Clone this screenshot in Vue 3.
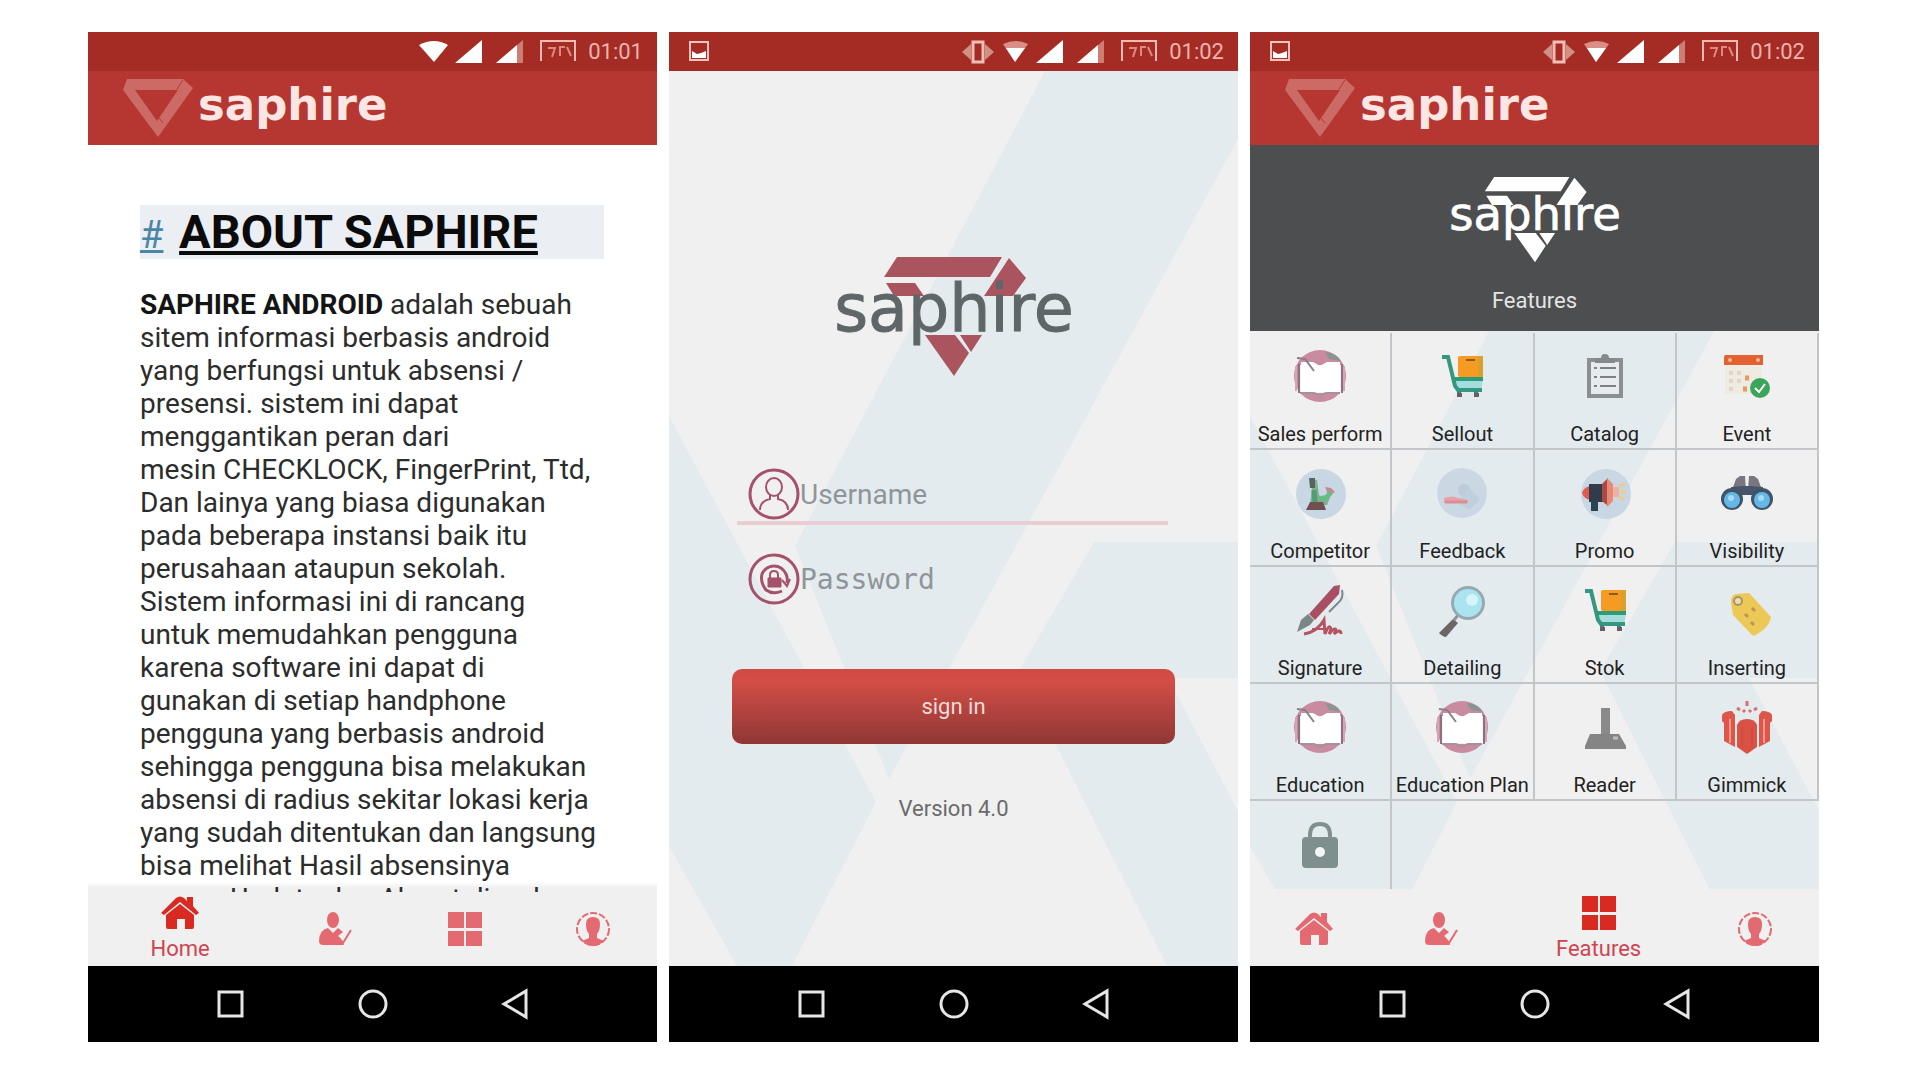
<script setup>
import { h } from 'vue'

const aboutLines = [
  'sitem informasi berbasis android',
  'yang berfungsi untuk absensi /',
  'presensi. sistem ini dapat',
  'menggantikan peran dari',
  'mesin CHECKLOCK, FingerPrint, Ttd,',
  'Dan lainya yang biasa digunakan',
  'pada beberapa instansi baik itu',
  'perusahaan ataupun sekolah.',
  'Sistem informasi ini di rancang',
  'untuk memudahkan pengguna',
  'karena software ini dapat di',
  'gunakan di setiap handphone',
  'pengguna yang berbasis android',
  'sehingga pengguna bisa melakukan',
  'absensi di radius sekitar lokasi kerja',
  'yang sudah ditentukan dan langsung',
  'bisa melihat Hasil absensinya',
  'secara Update dan Akurat di web',
]

const book =
  '<circle cx="28" cy="28" r="26" fill="#c98ba0"/><path d="M33 4q12 1 16 9l-12-2z" fill="#8b9493"/><path d="M6 17h44v28H6z" fill="#f6eff3"/><path d="M4 18v25M52 18v25" stroke="#d3a5b5" stroke-width="2"/><path d="M7 16v29M50 16v29" stroke="#8d6f80" stroke-width="2"/><path d="M9 14h12l7 4 7-4h13v30H9z" fill="#fff"/><path d="M5 10l8 1 9 12" fill="none" stroke="#8a8088" stroke-width="2"/><path d="M8 45h14l6 3 6-3h14" fill="none" stroke="#a6909a" stroke-width="2"/>'
const cart =
  '<rect x="24" y="8" width="25" height="21" rx="2" fill="#f59a22"/><path d="M44 8h5v21h-5z" fill="#d9a02c"/><path d="M32 12h9" stroke="#8f5a1c" stroke-width="2"/><path d="M20 33h29l-2 9H22z" fill="#a5dcdc"/><path d="M8 9h6l7 29 3 4h24" fill="none" stroke="#35977f" stroke-width="4"/><path d="M19 31h30" stroke="#2d9a78" stroke-width="4"/><path d="M25 43v5M42 43v5" stroke="#2d8f7e" stroke-width="4"/><path d="M23 47h5M40 47h5" stroke="#6f5a68" stroke-width="4"/>'

const icons = {
  book,
  cart,
  clipboard:
    '<path d="M12 12h32v36H12z" fill="#e6ebee" stroke="#8b8f92" stroke-width="4"/><path d="M18 15v-5h6q0-4 4-4t4 4h6v5z" fill="#85898c"/><path d="M17 20h3M17 29h3M17 38h3M23 20h16M23 29h16M23 38h16" stroke="#7d8184" stroke-width="2"/>',
  event:
    '<path d="M6 18h37v28H6z" fill="#efebe2"/><path d="M5 9q0-2 2-2h37v10H5z" fill="#e4622f"/><circle cx="11" cy="12" r="2" fill="#f4b49b"/><circle cx="39" cy="12" r="2" fill="#f4b49b"/><path d="M10 25h4M18 25h4M10 33h4M18 33h4M10 41h4" stroke="#dcd6cb" stroke-width="4"/><path d="M26 30h4M24 41h4" stroke="#e59a62" stroke-width="5"/><circle cx="41" cy="40" r="10" fill="#3ba55b"/><path d="M36 40l4 4 6-8" fill="none" stroke="#fff" stroke-width="2"/>',
  competitor:
    '<circle cx="29" cy="29" r="25" fill="#c9d6e3"/><path d="M18 40l3-25 4 0 2 15 5 4 5-11 4 2-6 15z" fill="#7fae90"/><path d="M17 13h6v10h-5z" fill="#56635f"/><path d="M22 25l1 13" stroke="#4f9e6f" stroke-width="5"/><path d="M33 22l6 1 4 4-6 4z" fill="#b98d90"/><path d="M28 33q7 0 11-5" stroke="#5fc281" stroke-width="4" fill="none"/><path d="M14 45l4-8h13l3 8z" fill="#70504f"/>',
  feedback:
    '<circle cx="28" cy="28" r="25" fill="#cbd8e4"/><circle cx="30" cy="25" r="6" fill="#bdcbd6"/><path d="M34 22l12 12-10 11-12-6z" fill="#c0cfdc"/><path d="M10 33q9-3 14 0l10 2v3H10z" fill="#e5a3a6"/><path d="M11 37h22" stroke="#dc8c92" stroke-width="3"/>',
  promo:
    '<circle cx="29" cy="29" r="25" fill="#c9d6e3"/><path d="M5 28q2-7 10-7v14q-8 0-10-7z" fill="#e05b4d"/><path d="M12 19h15v18H12z" fill="#303b4c"/><path d="M14 35h7v11h-7z" fill="#2c4250"/><path d="M25 19l6-6v28l-6-5z" fill="#a94a43"/><path d="M30 13l6 6v17l-6 6z" fill="#e98a79"/><path d="M36 22h6v10h-6z" fill="#efb2a2"/><path d="M42 21l6-2M43 27h6M42 32l5 2" stroke="#e8cf8c" stroke-width="3"/>',
  binoculars:
    '<path d="M17 14l4-3h5l1 14H13zM39 14l-4-3h-5l-1 14h14z" fill="#7a7681"/><path d="M12 22l12-1h8l12 1-2 10-9-2h-10l-9 2z" fill="#48566b"/><circle cx="13" cy="34" r="11" fill="#3f5468"/><circle cx="43" cy="34" r="11" fill="#3f5468"/><circle cx="13" cy="35" r="8" fill="#65b8e6"/><circle cx="43" cy="35" r="8" fill="#65b8e6"/><circle cx="12" cy="33" r="3" fill="#a4dbf5"/><circle cx="42" cy="33" r="3" fill="#a4dbf5"/>',
  signature:
    '<path d="M48 3l-6 1-25 28 6 6 24-26z" fill="#a94f63"/><path d="M50 8q2 8-4 13l-9 9" fill="none" stroke="#7e888b" stroke-width="2"/><path d="M16 32l6 6-4 5-13 7 4-12z" fill="#7c8785"/><path d="M12 52q13-2 20-14l1 14q3-8 5-7t-1 7q4-5 6-5t-1 5q3-3 5-3t2 3" fill="none" stroke="#b45462" stroke-width="3"/><path d="M20 47h14" stroke="#b45462" stroke-width="2"/>',
  magnifier:
    '<path d="M19 37l5 4-12 14q-3 0-7-4z" fill="#6d6468"/><path d="M20 38l5-6" stroke="#8e9299" stroke-width="3"/><circle cx="34" cy="21" r="17" fill="#95a9b0"/><circle cx="34" cy="21" r="14" fill="#abe4f0"/><circle cx="38" cy="18" r="6" fill="#d4f4f8"/>',
  tag:
    '<path d="M12 20q0-7 5-8l13-1 22 24q-2 12-18 19L14 33z" fill="#ecc957"/><circle cx="19" cy="19" r="4" fill="#ecdcae" stroke="#aa9360" stroke-width="2"/><path d="M33 26l3 3M26 32l3 3M32 40l3 3" stroke="#c5905c" stroke-width="3"/>',
  reader:
    '<path d="M24 9h9v26h-9z" fill="#8a8a8a"/><path d="M13 35h29l7 12v3H8v-3z" fill="#858585"/><path d="M36 39h5" stroke="#bdbdbd" stroke-width="3"/>',
  gift:
    '<path d="M3 16q2-4 10-4l3 4v32L5 42V24l-2-2zM53 16q-2-4-10-4l-3 4v32l11-6V24l2-2z" fill="#de5549"/><path d="M18 26q2-6 10-6t10 6v22l-10 7-10-7z" fill="#da5246"/><path d="M28 2v5M18 9l3 2M38 9l-3 2M24 11l2 2M32 11l-2 2" stroke="#da6e70" stroke-width="3"/><path d="M11 20v24M45 20v24" stroke="#ee9a90" stroke-width="2"/><path d="M23 28v20M33 28v20" stroke="#c8443a" stroke-width="1"/>',
  lock:
    '<path d="M18 25v-6q0-11 10-11t10 11v6" fill="none" stroke="#80908f" stroke-width="4"/><rect x="10" y="21" width="36" height="31" rx="4" fill="#7f8f8e"/><circle cx="28" cy="36" r="5" fill="#f2f5f5"/>',
}

const features = [
  { label: 'Sales perform', icon: 'book' },
  { label: 'Sellout', icon: 'cart' },
  { label: 'Catalog', icon: 'clipboard' },
  { label: 'Event', icon: 'event' },
  { label: 'Competitor', icon: 'competitor' },
  { label: 'Feedback', icon: 'feedback' },
  { label: 'Promo', icon: 'promo' },
  { label: 'Visibility', icon: 'binoculars' },
  { label: 'Signature', icon: 'signature' },
  { label: 'Detailing', icon: 'magnifier' },
  { label: 'Stok', icon: 'cart' },
  { label: 'Inserting', icon: 'tag' },
  { label: 'Education', icon: 'book' },
  { label: 'Education Plan', icon: 'book' },
  { label: 'Reader', icon: 'reader' },
  { label: 'Gimmick', icon: 'gift' },
  { label: '', icon: 'lock' },
]

const tabIcons = {
  home: '<path d="M0 17L15 2q4-3 8 0l3 3V1h6v9l6 7-3 2L19 6 3 19z"/><path d="M5 19L19 8l14 11v12q0 2-2 2h-7V23h-8v10H7q-2 0-2-2z"/>',
  attendance:
    '<ellipse cx="16" cy="8" rx="6" ry="8"/><path d="M2 29q0-11 9-13l5 5 5-5 5 4-5 4 6 9H6q-4 0-4-4z"/><path d="M21 25l5 6 8-13" fill="none" stroke="currentColor" stroke-width="2"/>',
  features: '<path d="M2 0h16v16H2zM20 0h16v16H20zM2 19h16v15H2zM20 19h16v15H20z"/>',
  profile:
    '<circle cx="19" cy="17" r="16" fill="none" stroke="currentColor" stroke-width="2" stroke-dasharray="7 2"/><path d="M12 12q0-7 7-7t7 7q0 7-3 10v4l7 3q-5 5-11 5T8 29l7-3v-4q-3-3-3-10z"/>',
}
const tabs = [
  { id: 'home', label: 'Home' },
  { id: 'attendance', label: 'Attendance' },
  { id: 'features', label: 'Features' },
  { id: 'profile', label: 'Profile' },
]

const StatusBar = (props) =>
  h('div', { class: 'status' }, [
    props.busy
      ? h('svg', {
          class: 'status-photo', viewBox: '0 0 20 22',
          innerHTML: '<path d="M1 1h18v18H1z" fill="none" stroke="#f3c3bc" stroke-width="2"/><path d="M3 10l5 3 4-1 5-2v7H3z" fill="#fff"/>',
        })
      : null,
    h('svg', {
      class: 'status-signals', viewBox: '0 0 195 26',
      innerHTML:
        (props.busy
          ? '<path d="M0 13l9-8v16zM32 13l-9-8v16z" fill="#cf9184"/><path d="M11 3h10v20H11z" fill="#a52c25" stroke="#f4bdb7" stroke-width="3"/><path d="M41 5q13-6 25 0L53 23z" fill="#d98f86"/><path d="M44 9h19L53 23z" fill="#fff"/>'
          : '<path d="M38 6q15-8 29 0L53 23z" fill="#fff"/>') +
        '<path d="M74 24L101 1v23z" fill="#fff"/><path d="M115 24L142 1v23z" fill="#cf7c73"/><path d="M115 24l21-18v18z" fill="#fff"/><path d="M160 22V2h34v20" fill="none" stroke="#f1b9b2" stroke-width="2"/><path d="M167 9h7l-3 9M184 8h-5v9M186 8l4 9" fill="none" stroke="#dd8980" stroke-width="2"/>',
    }),
    h('span', { class: 'status-time' }, props.time),
  ])
StatusBar.props = ['time', 'busy']

const Brand = () =>
  h('header', { class: 'brand' }, [
    h('svg', {
      class: 'brand-mark', viewBox: '0 0 70 58',
      innerHTML: '<path d="M4 0h56l10 9-35 49L0 11z M12 11l22 31 21-31z" fill="#cc6b65" fill-rule="evenodd"/><path d="M60 1l-6 9M36 39l4 5" stroke="#b63631" stroke-width="1"/>',
    }),
    h('span', { class: 'brand-name' }, 'saphire'),
  ])

const Logo = () =>
  h('svg', {
    class: 'logo', viewBox: '0 0 240 120', role: 'img', 'aria-label': 'saphire',
    innerHTML:
      '<path fill="currentColor" d="M63 0h105l-12 20H50zM175 1l17 20-13 18h-29zM52 26h29l9 13H60zM91 78h30l14 18-15 23zM126 78h22l-11 17z"/><text class="logo-text" x="120" y="74" text-anchor="middle">saphire</text>',
  })

const Backdrop = () =>
  h('svg', {
    class: 'backdrop', viewBox: '0 0 569 895', preserveAspectRatio: 'xMidYMin slice', 'aria-hidden': 'true',
    innerHTML:
      '<g fill="#e4ebee"><path d="M0 345l207 386-84 164H68L0 775z"/><path d="M376 0h193v68L220 708 126 475z"/><path d="M425 471h144v136h-70l70 133v155h-71L350 600z"/></g>',
  })

const NavBar = () =>
  h('nav', { class: 'sysnav', 'aria-label': 'System' }, [
    h('button', { type: 'button', 'aria-label': 'Recent apps' }, h('svg', { viewBox: '0 0 32 32', innerHTML: '<path d="M4 4h23v24H4z"/>' })),
    h('button', { type: 'button', 'aria-label': 'Home screen' }, h('svg', { viewBox: '0 0 32 32', innerHTML: '<circle cx="16" cy="16" r="13"/>' })),
    h('button', { type: 'button', 'aria-label': 'Back' }, h('svg', { viewBox: '0 0 32 32', innerHTML: '<path d="M27 3v26L5 16z"/>' })),
  ])

const TabBar = (props) =>
  h('nav', { class: 'tabs', 'aria-label': 'Sections' },
    tabs.map((t) =>
      h('a', { href: '#' + t.id, class: ['tab', { active: t.id === props.active }], 'aria-label': t.label }, [
        h('svg', { viewBox: '0 0 38 36', fill: 'currentColor', innerHTML: tabIcons[t.id] }),
        t.id === props.active ? h('span', t.label) : null,
      ]),
    ),
  )
TabBar.props = ['active']
</script>

<template>
  <main class="page">
    <section class="phone">
      <StatusBar time="01:01" />
      <div class="screen">
        <Brand />
        <article class="about">
          <h1><a href="#about">#</a> <u>ABOUT SAPHIRE</u></h1>
          <p>
            <span class="line"><b>SAPHIRE ANDROID</b> adalah sebuah</span>
            <span v-for="line in aboutLines" :key="line" class="line">{{ line }}</span>
          </p>
        </article>
        <TabBar active="home" />
      </div>
      <NavBar />
    </section>

    <section class="phone">
      <StatusBar time="01:02" :busy="true" />
      <div class="screen">
        <Backdrop />
        <form class="login" @submit.prevent>
          <Logo />
          <div class="field user">
            <label for="username" aria-label="Username">
              <svg viewBox="0 0 52 52" fill="none" stroke="#a4516a" stroke-width="3">
                <circle cx="26" cy="26" r="24" />
                <g stroke-width="2">
                  <ellipse cx="26" cy="19" rx="8" ry="9" />
                  <path d="M22 27v4q-10 2-10 11M30 27v4q10 2 10 11" />
                </g>
              </svg>
            </label>
            <input id="username" type="text" placeholder="Username" />
          </div>
          <div class="field pass">
            <label for="password" aria-label="Password">
              <svg viewBox="0 0 52 52" fill="none" stroke="#a4516a" stroke-width="3">
                <circle cx="26" cy="26" r="24" />
                <path d="M34 38q-9 4-16-1-6-8-4-16 4-8 12-8t12 8q2 4 1 9" />
                <path d="M34 27l5 6 3-7" stroke-width="2" />
                <path d="M22 25v-3q0-4 4-4t4 4v3" stroke-width="2" />
                <path d="M20 25h13v9H20z" fill="#a4516a" stroke-width="1" />
              </svg>
            </label>
            <input id="password" type="password" placeholder="Password" />
          </div>
          <button class="signin" type="submit">sign in</button>
          <p class="version">Version 4.0</p>
        </form>
      </div>
      <NavBar />
    </section>

    <section class="phone">
      <StatusBar time="01:02" :busy="true" />
      <div class="screen">
        <Backdrop />
        <Brand />
        <div class="hero">
          <Logo />
          <h2>Features</h2>
        </div>
        <ul class="grid">
          <li v-for="(f, i) in features" :key="i">
            <button type="button" :aria-label="f.label || 'Lock'">
              <svg viewBox="0 0 56 56" v-html="icons[f.icon]"></svg>
              <span>{{ f.label }}</span>
            </button>
          </li>
        </ul>
        <TabBar active="features" />
      </div>
      <NavBar />
    </section>
  </main>
</template>

<style>
body {
  margin: 0;
  background: #fff;
}

.page {
  box-sizing: border-box;
  display: flex;
  gap: 12px;
  height: 100vh;
  min-height: 960px;
  padding: 32px 95px 24px 88px;
  font-family: Roboto, "Liberation Sans", sans-serif;
}

.page button {
  border: 0;
  padding: 0;
  background: none;
  font: inherit;
  color: inherit;
}

.phone {
  flex: 1 1 0;
  min-width: 0;
  display: flex;
  flex-direction: column;
  background: #000;
}

.status {
  display: flex;
  align-items: center;
  gap: 12px;
  height: 39px;
  padding: 0 14px 0 20px;
  background: #a52c25;
}

.status-photo {
  width: 20px;
  height: 22px;
}

.status-signals {
  width: 195px;
  height: 26px;
  margin-left: auto;
}

.status-time {
  font-size: 22px;
  line-height: 24px;
  color: #edb3ad;
}

.screen {
  position: relative;
  flex: 1 1 0;
  min-height: 0;
  display: flex;
  flex-direction: column;
  background: #f0f0f0;
}

.backdrop {
  position: absolute;
  inset: 0;
  width: 100%;
  height: 100%;
}

.brand {
  position: relative;
  flex: none;
  display: flex;
  align-items: center;
  gap: 5px;
  height: 74px;
  padding-left: 35px;
  background: #b63631;
}

.brand-mark {
  width: 70px;
  height: 58px;
}

.brand-name {
  font-family: "DejaVu Sans", sans-serif;
  font-weight: 700;
  font-size: 45px;
  line-height: 52px;
  padding-bottom: 6px;
  color: #fbe6e3;
}

.about {
  position: relative;
  z-index: 1;
  flex: 1 1 0;
  min-height: 0;
  overflow: hidden;
  margin-bottom: -3px;
  padding: 60px 53px 0 52px;
  background: linear-gradient(#fff calc(100% - 10px), #f0f0f0 calc(100% - 4px));
}

.about h1 {
  margin: 0;
  height: 54px;
  font-size: 47px;
  line-height: 54px;
  white-space: nowrap;
  color: #0b0b0b;
  background: #ebeef2;
}

.about h1 a {
  margin-right: 4px;
  font-size: 38px;
  font-weight: 400;
  color: #4b86a8;
}

.about p {
  margin: 29px 0 0;
  font-size: 28px;
  line-height: 33px;
  color: #2c2c2c;
}

.about b {
  color: #141414;
}

.line {
  display: block;
  white-space: nowrap;
}

.tabs {
  position: relative;
  flex: none;
  display: flex;
  height: 77px;
  background: #f0f0f0;
}

.tab {
  box-sizing: border-box;
  flex: 16 1 0;
  display: flex;
  flex-direction: column;
  align-items: center;
  justify-content: center;
  padding-top: 4px;
  color: #e36a70;
  text-decoration: none;
}

.tab.active {
  flex-grow: 23;
  padding-top: 6px;
  color: #d92a22;
}

.tab svg {
  width: 38px;
  height: 36px;
}

.tab span {
  font-size: 22px;
  line-height: 34px;
  color: #cf4450;
}

.sysnav {
  flex: none;
  display: flex;
  justify-content: center;
  align-items: center;
  gap: 110px;
  height: 76px;
}

.sysnav svg {
  display: block;
  width: 32px;
  height: 32px;
  fill: none;
  stroke: #e6e6e6;
  stroke-width: 3;
}

.logo {
  display: block;
  overflow: visible;
  width: 240px;
  height: 120px;
}

.logo-text {
  font-family: "DejaVu Sans", sans-serif;
  font-size: 65px;
  fill: #5f6668;
  stroke: #5f6668;
}

.login {
  position: relative;
  display: flex;
  flex-direction: column;
  padding: 186px 63px 0;
  color: #a9545f;
}

.login .logo {
  align-self: center;
}

.field {
  display: flex;
  align-items: center;
  height: 54px;
  margin: 0 7px 0 5px;
  padding-left: 11px;
}

.field svg {
  display: block;
  width: 52px;
  height: 52px;
}

.field input {
  flex: 1;
  min-width: 0;
  height: 52px;
  padding: 0;
  border: 0;
  outline: 0;
  background: none;
  font-family: Roboto, sans-serif;
  font-size: 28px;
  color: #555;
}

.field input::placeholder {
  color: #8e9699;
  opacity: 1;
}

.field.user {
  margin-top: 90px;
  border-bottom: 4px solid #e9cdd3;
}

.field.pass {
  margin-top: 27px;
}

.field.pass input {
  font-family: "DejaVu Sans Mono", monospace;
}

.page .signin {
  height: 75px;
  margin-top: 63px;
  border-radius: 10px;
  background: linear-gradient(#cf4a43, #d34e47 15%, #8f3734);
  font-size: 22px;
  color: #f0dcda;
}

.version {
  margin: 53px 0 0;
  font-size: 22px;
  line-height: 24px;
  text-align: center;
  color: #6b6b6b;
}

.hero {
  box-sizing: border-box;
  position: relative;
  flex: none;
  display: flex;
  flex-direction: column;
  align-items: center;
  height: 186px;
  padding-top: 32px;
  background: #4c4e50;
  color: #fff;
}

.hero .logo {
  width: 172px;
  height: 86px;
}

.hero .logo-text {
  fill: #fff;
  stroke: #fff;
}

.hero h2 {
  margin: 25px 0 0;
  font-size: 22px;
  line-height: 26px;
  font-weight: 400;
  color: #e4e4e4;
}

.grid {
  position: relative;
  flex: 1 1 0;
  min-height: 0;
  overflow: hidden;
  display: grid;
  grid-template-columns: repeat(4, 1fr);
  grid-auto-rows: 117px;
  margin: 0;
  padding: 2px 0 0;
  list-style: none;
}

.grid li {
  border-right: 2px solid #c3c6c8;
  border-bottom: 2px solid #c3c6c8;
}

.page .grid button {
  display: flex;
  flex-direction: column;
  align-items: center;
  width: 100%;
  padding-top: 15px;
  white-space: nowrap;
}

.grid svg {
  width: 56px;
  height: 56px;
}

.grid span {
  margin-top: 18px;
  font-size: 20px;
  line-height: 24px;
  color: #222;
}
</style>
